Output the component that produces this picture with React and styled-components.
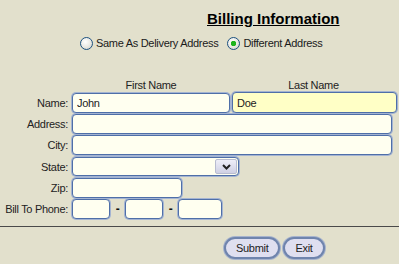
import React from 'react';
import styled, { createGlobalStyle } from 'styled-components';

const GlobalStyle = createGlobalStyle`
  html, body {
    margin: 0;
    padding: 0;
    background: #e2e0cc;
  }
  body {
    font-family: 'Liberation Sans', Arial, sans-serif;
    font-size: 11px;
    color: #1a1a1a;
  }
`;

const App = () => {
  return (
    <Page>
      <GlobalStyle />
      <Title>Billing Information</Title>
      <RadioRow>
        <RadioLabel>
          <Radio type="radio" name="addr" />
          Same As Delivery Address
        </RadioLabel>
        <RadioLabel>
          <Radio type="radio" name="addr" defaultChecked />
          Different Address
        </RadioLabel>
      </RadioRow>

      <ColHeads>
        <span />
        <ColHead>First Name</ColHead>
        <ColHead>Last Name</ColHead>
      </ColHeads>

      <Form>
        <Label>Name:</Label>
        <Pair>
          <Field $w={158} defaultValue="John" />
          <Field $w={165} $active defaultValue="Doe" />
        </Pair>

        <Label>Address:</Label>
        <Field $w={320} />

        <Label>City:</Label>
        <Field $w={320} />

        <Label>State:</Label>
        <SelectBox>
          <Select defaultValue="">
            <option value=""></option>
          </Select>
          <Arrow>
            <svg width="9" height="6" viewBox="0 0 9 6">
              <path d="M1 1 L4.5 4.5 L8 1" fill="none" stroke="#222" strokeWidth="2" />
            </svg>
          </Arrow>
        </SelectBox>

        <Label>Zip:</Label>
        <Field $w={110} />

        <Label>Bill To Phone:</Label>
        <Pair>
          <Field $w={38} />
          <Dash>-</Dash>
          <Field $w={38} />
          <Dash>-</Dash>
          <Field $w={44} />
        </Pair>
      </Form>

      <Divider />

      <Buttons>
        <Button>Submit</Button>
        <Button>Exit</Button>
      </Buttons>
    </Page>
  );
};

const Page = styled.div`
  width: 399px;
  height: 264px;
  padding-top: 10px;
  box-sizing: border-box;
  overflow: hidden;
  letter-spacing: -0.3px;
`;

const Title = styled.div`
  margin-left: 207px;
  font-size: 15px;
  line-height: 18px;
  font-weight: bold;
  text-decoration: underline;
  letter-spacing: 0;
  color: #000;
`;

const RadioRow = styled.div`
  display: flex;
  align-items: center;
  gap: 9px;
  margin-top: 8px;
  padding-left: 80px;
  height: 15px;
`;

const RadioLabel = styled.label`
  display: flex;
  align-items: center;
  gap: 3px;
  line-height: 15px;
`;

const Radio = styled.input`
  appearance: none;
  margin: 0;
  width: 13px;
  height: 13px;
  border-radius: 50%;
  border: 1px solid #1c5180;
  box-sizing: border-box;
  background: radial-gradient(circle at 40% 35%, #ffffff 0%, #e8e8e2 55%, #c8c8c0 100%);

  &:checked {
    background:
      radial-gradient(circle, #1fb41f 0 2.5px, transparent 3px),
      radial-gradient(circle at 40% 35%, #ffffff 0%, #e8e8e2 55%, #c8c8c0 100%);
  }
`;

const ColHeads = styled.div`
  display: grid;
  grid-template-columns: 72px 158px 167px;
  margin-top: 27px;
  line-height: 14px;
`;

const ColHead = styled.span`
  text-align: center;
  color: #222;
`;

const Form = styled.div`
  display: grid;
  grid-template-columns: 68px 1fr;
  column-gap: 4px;
  row-gap: 1.2px;
  align-items: center;
`;

const Label = styled.div`
  text-align: right;
  line-height: 20px;
  white-space: nowrap;
  color: #222;
`;

const Pair = styled.div`
  display: flex;
  align-items: center;
  gap: 2px;
`;

const Field = styled.input`
  box-sizing: border-box;
  width: ${(p) => p.$w}px;
  height: ${(p) => (p.$active ? 21 : 20)}px;
  margin: 0;
  padding: 0 4px;
  border: 1px solid #4f6fa8;
  border-radius: 4px;
  box-shadow: 0 0 0 1px #a4b4d2;
  background: ${(p) => (p.$active ? '#ffffc6' : '#fffff0')};
  font-family: 'Liberation Sans', Arial, sans-serif;
  font-size: 11px;
  letter-spacing: -0.3px;
  color: #222;
  outline: none;
`;

const Dash = styled.span`
  width: 11px;
  text-align: center;
  font-weight: bold;
  font-size: 12px;
  color: #111;
`;

const SelectBox = styled.div`
  display: flex;
  align-items: stretch;
  box-sizing: border-box;
  width: 167px;
  height: 19px;
  border: 1px solid #4f6fa8;
  border-radius: 4px;
  box-shadow: 0 0 0 1px #a4b4d2;
  background: #fffff0;
  overflow: hidden;
`;

const Select = styled.select`
  appearance: none;
  flex: 1;
  border: none;
  background: transparent;
  outline: none;
`;

const Arrow = styled.span`
  display: flex;
  align-items: center;
  justify-content: center;
  width: 20px;
  margin: 1px;
  border-radius: 2px;
  border: 1px solid #b8bcd0;
  background: linear-gradient(#eeeef8, #cfd0e4);
`;

const Divider = styled.hr`
  margin: 7px 0 0;
  border: none;
  border-top: 1px solid #4a4a4a;
  height: 0;
`;

const Buttons = styled.div`
  display: flex;
  gap: 3px;
  margin-top: 10px;
  padding-left: 224px;
`;

const Button = styled.button`
  height: 22px;
  padding: 0 10px;
  border: 2px solid #6f84ad;
  box-shadow: 0 0 0 1px #a6b3cd;
  border-radius: 11px;
  background: #dfdff0;
  font-family: 'Liberation Sans', Arial, sans-serif;
  font-size: 11px;
  letter-spacing: -0.3px;
  color: #222;
  line-height: 16px;
`;

export default App;
